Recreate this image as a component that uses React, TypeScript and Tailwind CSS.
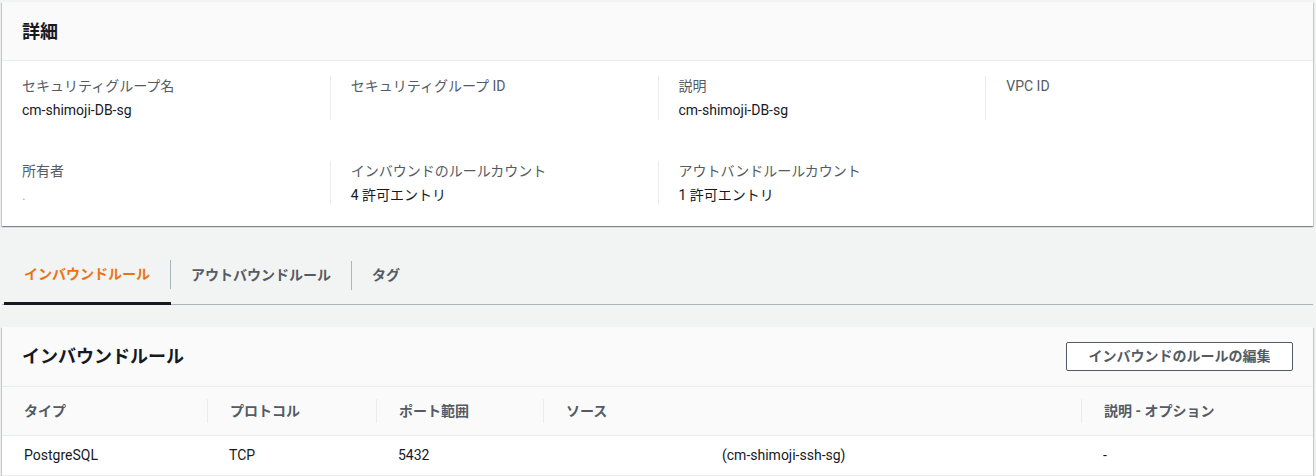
const FONT = "font-[Roboto,'Noto_Sans_CJK_JP',sans-serif]"

type Field = { label: string; value?: string; faint?: boolean }

const ROW_1: Field[] = [
  { label: 'セキュリティグループ名', value: 'cm-shimoji-DB-sg' },
  { label: 'セキュリティグループ ID' },
  { label: '説明', value: 'cm-shimoji-DB-sg' },
  { label: 'VPC ID' },
]

const ROW_2: Field[] = [
  { label: '所有者', value: '.', faint: true },
  { label: 'インバウンドのルールカウント', value: '4 許可エントリ' },
  { label: 'アウトバンドルールカウント', value: '1 許可エントリ' },
]

const TABS = ['インバウンドルール', 'アウトバウンドルール', 'タグ']

const COLUMNS = [
  { title: 'タイプ', width: 'w-[205px]' },
  { title: 'プロトコル', width: 'w-[169px]' },
  { title: 'ポート範囲', width: 'w-[167px]' },
  { title: 'ソース', width: 'w-[538px]' },
  { title: '説明 - オプション', width: 'flex-1' },
]

const PANEL =
  'bg-white shadow-[0_1px_1px_0_rgba(0,28,36,0.3),1px_1px_1px_0_rgba(0,28,36,0.15),-1px_1px_1px_0_rgba(0,28,36,0.15)]'

function FieldCell({ field, first }: { field: Field; first: boolean }) {
  return (
    <div className={`px-5 ${first ? '' : 'border-l border-[#eaeded]'}`}>
      <p className="text-[14px] leading-[20px] text-[#545b64]">{field.label}</p>
      <p className={`mt-[4px] h-[20px] text-[14px] leading-[20px] ${field.faint ? 'text-[#b0b0b0] text-[8px]' : 'text-[#16191f]'}`}>
        {field.value ?? ''}
      </p>
    </div>
  )
}

export default function App() {
  return (
    <div className={`min-h-[476px] bg-[#f2f3f3] pt-[2px] pl-[2px] pr-[3px] ${FONT}`}>
      {/* Details panel */}
      <section className={PANEL}>
        <div className="flex h-[59px] items-center border-b border-[#eaeded] bg-[#fafafa] px-5">
          <h2 className="text-[18px] font-bold text-[#16191f]">詳細</h2>
        </div>
        <div className="pt-[15px] pb-[21px]">
          <div className="grid grid-cols-4">
            {ROW_1.map((f, i) => (
              <FieldCell key={f.label} field={f} first={i === 0} />
            ))}
          </div>
          <div className="mt-[41px] grid grid-cols-4">
            {ROW_2.map((f, i) => (
              <FieldCell key={f.label} field={f} first={i === 0} />
            ))}
          </div>
        </div>
      </section>

      {/* Tabs */}
      <div className="mt-[20px] flex h-[59px] items-stretch border-b border-[#aab7b8]">
        {TABS.map((t, i) => (
          <div
            key={t}
            className={`relative flex items-center ${i === 0 ? 'ml-[2px] -mb-px border-b-[3px] border-[#16191f]' : ''}`}
          >
            <span className={`px-5 text-[14px] font-bold ${i === 0 ? 'text-[#ec7211]' : 'text-[#545b64]'}`}>{t}</span>
            {i < TABS.length - 1 && <span className="h-[29px] w-px bg-[#aab7b8]" />}
          </div>
        ))}
      </div>

      {/* Inbound rules panel */}
      <section className={`mt-[22px] ${PANEL}`}>
        <div className="flex h-[60px] items-center justify-between border-b border-[#eaeded] bg-[#fafafa] px-5">
          <h2 className="text-[18px] font-bold text-[#16191f]">インバウンドルール</h2>
          <button className="h-[29px] w-[227px] rounded-[2px] border border-[#545b64] bg-white text-[14px] font-bold text-[#545b64]">
            インバウンドのルールの編集
          </button>
        </div>
        <div className="flex h-[49px] items-center border-b border-[#eaeded] bg-[#fafafa]">
          {COLUMNS.map((c, i) => (
            <div key={c.title} className={`flex h-[24px] items-center ${c.width} ${i === 0 ? '' : 'border-l border-[#eaeded]'}`}>
              <span className="pl-[22px] text-[14px] font-bold text-[#545b64]">{c.title}</span>
            </div>
          ))}
        </div>
        <div className="flex h-[40px] items-center border-b border-[#eaeded] text-[14px] text-[#16191f]">
          <div className="w-[205px] pl-[22px]">PostgreSQL</div>
          <div className="w-[169px] pl-[22px]">TCP</div>
          <div className="w-[167px] pl-[22px]">5432</div>
          <div className="w-[538px] pl-[22px]">
            <span className="inline-block w-[157px] text-[#e6e6e6]">&nbsp;</span>
            (cm-shimoji-ssh-sg)
          </div>
          <div className="flex-1 pl-[22px]">-</div>
        </div>
      </section>
    </div>
  )
}
